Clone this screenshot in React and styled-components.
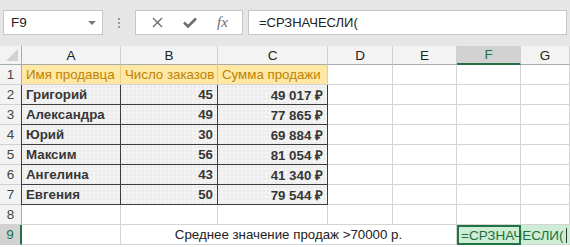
import React from 'react'
import styled, { createGlobalStyle, css } from 'styled-components'

const Global = createGlobalStyle`
  html, body {
    margin: 0;
    padding: 0;
    background: #ffffff;
    overflow: hidden;
  }
  body {
    font-family: 'Liberation Sans', Arial, sans-serif;
  }
`

const Page = styled.div`
  width: 570px;
  height: 247px;
  overflow: hidden;
  background: #ffffff;
`

const Toolbar = styled.div`
  display: flex;
  align-items: flex-start;
  height: 46px;
  box-sizing: border-box;
  padding: 10px 3px 0 3px;
  background: #e6e6e6;
`

const NameBox = styled.div`
  display: flex;
  align-items: center;
  justify-content: space-between;
  width: 100px;
  height: 25px;
  box-sizing: border-box;
  padding: 0 6px 0 7px;
  background: #ffffff;
  border: 1px solid #c6c6c6;
  font-size: 13.5px;
  color: #222222;
`

const Arrow = styled.span`
  width: 0;
  height: 0;
  border-left: 4px solid transparent;
  border-right: 4px solid transparent;
  border-top: 4px solid #7a7a7a;
`

const Grip = styled.div`
  display: flex;
  flex-direction: column;
  align-items: center;
  justify-content: center;
  gap: 2px;
  width: 32px;
  height: 25px;

  span {
    width: 2px;
    height: 2px;
    background: #9a9a9a;
  }
`

const FxButtons = styled.div`
  display: flex;
  align-items: center;
  justify-content: space-around;
  width: 108px;
  height: 25px;
  box-sizing: border-box;
  padding: 0 4px 0 6px;
  background: #ffffff;
  border: 1px solid #c6c6c6;
  color: #6e6e6e;
`

const FxText = styled.span`
  font-family: 'Liberation Serif', 'Times New Roman', serif;
  font-style: italic;
  font-size: 15px;
  color: #6e6e6e;
`

const FormulaInput = styled.div`
  flex: 1;
  display: flex;
  align-items: center;
  height: 25px;
  margin-left: 5px;
  box-sizing: border-box;
  padding: 0 10px;
  background: #ffffff;
  border: 1px solid #c6c6c6;
  font-size: 13px;
  color: #222222;
`

const Sheet = styled.div`
  display: grid;
  grid-template-columns: 22px 99px 97px 110px 65px 64px 64px 1fr;
  grid-template-rows: 19px repeat(9, 20px);
`

const Corner = styled.div`
  position: relative;
  background: #f3f3f3;
  border-right: 1px solid #ababab;
  border-bottom: 1px solid #ababab;

  &::after {
    content: '';
    position: absolute;
    right: 3px;
    bottom: 3px;
    width: 0;
    height: 0;
    border-left: 12px solid transparent;
    border-bottom: 12px solid #d2d2d2;
  }
`

const ColHead = styled.div`
  display: flex;
  align-items: center;
  justify-content: center;
  box-sizing: border-box;
  background: ${p => (p.$active ? '#d2d2d2' : '#f3f3f3')};
  border-right: 1px solid #d0d0d0;
  border-bottom: ${p => (p.$active ? '2px solid #217346' : '1px solid #ababab')};
  font-size: 13.5px;
  color: ${p => (p.$active ? '#217346' : '#222222')};
`

const RowHead = styled.div`
  display: flex;
  align-items: center;
  justify-content: center;
  box-sizing: border-box;
  background: ${p => (p.$active ? '#d2d2d2' : '#f3f3f3')};
  border-right: ${p => (p.$active ? '2px solid #217346' : '1px solid #ababab')};
  border-bottom: 1px solid #d0d0d0;
  font-size: 13.5px;
  color: ${p => (p.$active ? '#217346' : '#444444')};
`

const Cell = styled.div`
  display: flex;
  align-items: center;
  justify-content: ${p => (p.$align === 'right' ? 'flex-end' : p.$align === 'center' ? 'center' : 'flex-start')};
  box-sizing: border-box;
  padding: 0 4px;
  border-right: 1px solid #d4d4d4;
  border-bottom: 1px solid #d4d4d4;
  font-size: 13.3px;
  color: #222222;
  white-space: nowrap;
  overflow: hidden;
  grid-column: ${p => p.$span || 'auto'};

  ${p =>
    p.$kind === 'title' &&
    css`
      background: #fee8a3;
      color: #bf8206;
      border-right-color: #e6cf8a;
    `}

  ${p =>
    p.$kind === 'data' &&
    css`
      background-color: #f3f3f3;
      background-image: radial-gradient(#dcdcdc 0.6px, transparent 0.8px);
      background-size: 4px 4px;
      border-right-color: #3c3c3c;
      border-bottom-color: #3c3c3c;
      font-weight: bold;
      color: #363636;
    `}

  ${p =>
    p.$first &&
    css`
      box-shadow: -1px 0 0 #3c3c3c;
    `}
`

const EditCell = styled.div`
  position: relative;
  z-index: 1;
  display: flex;
  align-items: center;
  box-sizing: border-box;
  padding: 0 2px;
  background: #cdeed4;
  border: 2px solid #217346;
  font-size: 13.5px;
  color: #1f6e3e;
  white-space: nowrap;
  overflow: visible;
`

const Caret = styled.span`
  display: inline-block;
  flex: none;
  width: 1px;
  height: 15px;
  margin-left: 2px;
  background: #333333;
`

const Overflow = styled.div`
  background: #cdeed4;
  border-bottom: 1px solid #d4d4d4;
`

const CrossIcon = () => (
  <svg width="11" height="11" viewBox="0 0 11 11">
    <path d="M1 1 L10 10 M10 1 L1 10" stroke="#6e6e6e" strokeWidth="1.4" fill="none" />
  </svg>
)

const CheckIcon = () => (
  <svg width="14" height="11" viewBox="0 0 14 11">
    <path d="M1 5.5 L5 9.5 L13 1.5" stroke="#6e6e6e" strokeWidth="2.6" fill="none" />
  </svg>
)

const rows = [
  ['Григорий', '45', '49 017 ₽'],
  ['Александра', '49', '77 865 ₽'],
  ['Юрий', '30', '69 884 ₽'],
  ['Максим', '56', '81 054 ₽'],
  ['Ангелина', '43', '41 340 ₽'],
  ['Евгения', '50', '79 544 ₽'],
]

const cols = ['A', 'B', 'C', 'D', 'E', 'F', 'G']

const Blank = ({ count }) =>
  Array.from({ length: count }, (_, i) => <Cell key={i} />)

export default function App() {
  return (
    <Page>
      <Global />
      <Toolbar>
        <NameBox>
          F9
          <Arrow />
        </NameBox>
        <Grip>
          <span />
          <span />
          <span />
        </Grip>
        <FxButtons>
          <CrossIcon />
          <CheckIcon />
          <FxText>fx</FxText>
        </FxButtons>
        <FormulaInput>=СРЗНАЧЕСЛИ(</FormulaInput>
      </Toolbar>

      <Sheet>
        <Corner />
        {cols.map(c => (
          <ColHead key={c} $active={c === 'F'}>
            {c}
          </ColHead>
        ))}

        <RowHead>1</RowHead>
        <Cell $kind="title">Имя продавца</Cell>
        <Cell $kind="title">Число заказов</Cell>
        <Cell $kind="title">Сумма продажи</Cell>
        <Blank count={4} />

        {rows.map((r, i) => (
          <React.Fragment key={r[0]}>
            <RowHead>{i + 2}</RowHead>
            <Cell $kind="data" $first>
              {r[0]}
            </Cell>
            <Cell $kind="data" $align="right">
              {r[1]}
            </Cell>
            <Cell $kind="data" $align="right">
              {r[2]}
            </Cell>
            <Blank count={4} />
          </React.Fragment>
        ))}

        <RowHead>8</RowHead>
        <Blank count={7} />

        <RowHead $active>9</RowHead>
        <Cell />
        <Cell $span="3 / 7" $align="center">
          Среднее значение продаж &gt;70000 р.
        </Cell>
        <EditCell>
          =СРЗНАЧЕСЛИ(
          <Caret />
        </EditCell>
        <Overflow />
      </Sheet>
    </Page>
  )
}
